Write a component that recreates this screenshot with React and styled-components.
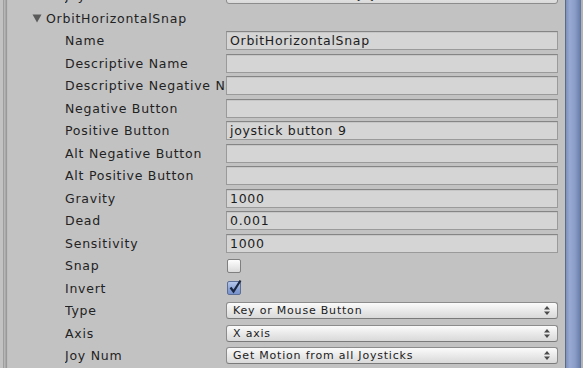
import React from "react";
import styled, { createGlobalStyle } from "styled-components";

const Global = createGlobalStyle`
  html, body { margin: 0; padding: 0; background: #c2c2c2; overflow: hidden; }
  body { width: 583px; height: 368px; font-family: "DejaVu Sans", "Liberation Sans", sans-serif; }
`;

const Frame = styled.div`
  display: flex;
  width: 583px;
  height: 368px;
  overflow: hidden;
  background: #c2c2c2;
`;

const Gutter = styled.div`
  flex: 0 0 8px;
  background: linear-gradient(to right,
    #c2c2c2 0 3px, #9e9e9e 3px 4px, #b6b6b6 4px 5px, #a9a9a9 5px 6px, #999 6px 7px, #bdbdbd 7px 8px);
`;

const Content = styled.div`
  flex: 1;
  display: flex;
  flex-direction: column;
  margin-top: -15.75px;
  padding-right: 7px;
  min-width: 0;
`;

const Scrollbar = styled.div`
  flex: 0 0 18px;
  display: flex;
  background: #b4b4b4;
`;

const Thumb = styled.div`
  flex: 0 0 15px;
  border-left: 1px solid #5c6a88;
  background: linear-gradient(to right, #7d90bb, #98aad2 25%, #8a9dc7 60%, #6d82ae 90%, #5f729c);
`;

const Row = styled.div`
  height: 22.5px;
  display: flex;
  align-items: center;
  padding-left: ${(p) => p.$indent}px;
  box-sizing: border-box;
  flex: 0 0 auto;
`;

const Label = styled.div`
  flex: 0 0 ${(p) => p.$width}px;
  white-space: nowrap;
  overflow: hidden;
  font-size: 12.5px;
  letter-spacing: 0.75px;
  color: #222;
`;

const HeaderLabel = styled.div`
  font-size: 12.5px;
  letter-spacing: 0.75px;
  color: #222;
  white-space: nowrap;
`;

const Arrow = styled.svg`
  width: 10px;
  height: 9px;
  margin-right: 4px;
  flex: 0 0 auto;
`;

const Field = styled.div`
  flex: 1;
  height: 19px;
  box-sizing: border-box;
  background: #d5d5d5;
  border: 1px solid #9a9a9a;
  border-top-color: #858585;
  box-shadow: inset 0 1px 0 #c6c6c6;
  font-size: 12.5px;
  letter-spacing: 0.7px;
  color: #1c1c1c;
  padding-left: 3px;
  line-height: 17px;
  white-space: nowrap;
  overflow: hidden;
`;

const Popup = styled.div`
  flex: 1;
  height: 17px;
  box-sizing: border-box;
  border: 1px solid #8c8c8c;
  border-bottom-color: #7a7a7a;
  border-radius: 3px;
  background: linear-gradient(to bottom, #fbfbfb, #e6e6e6 60%, #d9d9d9);
  display: flex;
  align-items: center;
  padding: 0 7px 0 6px;
  font-size: 11px;
  letter-spacing: 0.8px;
  color: #1c1c1c;
  white-space: nowrap;
`;

const PopupText = styled.span`
  flex: 1;
`;

const Check = styled.div`
  position: relative;
  width: 14px;
  height: 14px;
  margin-left: 1px;
  box-sizing: border-box;
  border: 1px solid ${(p) => (p.$on ? "#5d6f96" : "#7f7f7f")};
  border-radius: 2px;
  background: ${(p) =>
    p.$on
      ? "linear-gradient(to bottom, #b5c6ea, #8aa3d6 60%, #7893cc)"
      : "linear-gradient(to bottom, #fdfdfd, #e8e8e8 60%, #dadada)"};
`;

const CheckMark = styled.svg`
  position: absolute;
  left: 0px;
  top: -3px;
  width: 14px;
  height: 15px;
`;

const PrevPopup = styled.div`
  flex: 1;
  height: 17px;
  box-sizing: border-box;
  border: 1px solid #8c8c8c;
  border-radius: 3px;
  background: linear-gradient(to bottom, #fbfbfb, #e6e6e6 60%, #d9d9d9);
  font-size: 11px;
  letter-spacing: 0.8px;
  padding-left: 6px;
  line-height: 15px;
  color: #1c1c1c;
`;

const Stepper = () => (
  <svg width="6" height="9" viewBox="0 0 6 9">
    <polygon points="0,3.5 3,0 6,3.5" fill="#4a4a4a" />
    <polygon points="0,5.5 3,9 6,5.5" fill="#4a4a4a" />
  </svg>
);

const LABEL_W = 161;
const INDENT = 57;

const rows = [
  { label: "Name", kind: "field", value: "OrbitHorizontalSnap" },
  { label: "Descriptive Name", kind: "field", value: "" },
  { label: "Descriptive Negative Name", kind: "field", value: "" },
  { label: "Negative Button", kind: "field", value: "" },
  { label: "Positive Button", kind: "field", value: "joystick button 9" },
  { label: "Alt Negative Button", kind: "field", value: "" },
  { label: "Alt Positive Button", kind: "field", value: "" },
  { label: "Gravity", kind: "field", value: "1000" },
  { label: "Dead", kind: "field", value: "0.001" },
  { label: "Sensitivity", kind: "field", value: "1000" },
  { label: "Snap", kind: "check", value: false },
  { label: "Invert", kind: "check", value: true },
  { label: "Type", kind: "popup", value: "Key or Mouse Button" },
  { label: "Axis", kind: "popup", value: "X axis" },
  { label: "Joy Num", kind: "popup", value: "Get Motion from all Joysticks" },
];

function Control({ row }) {
  if (row.kind === "field") return <Field>{row.value}</Field>;
  if (row.kind === "check")
    return (
      <Check $on={row.value}>
        {row.value && (
          <CheckMark viewBox="0 0 14 15">
            <path d="M2.5 8.5 L5.5 12.5 L12.5 1.5" fill="none" stroke="#1b2740" strokeWidth="2.2" strokeLinejoin="miter" />
          </CheckMark>
        )}
      </Check>
    );
  return (
    <Popup>
      <PopupText>{row.value}</PopupText>
      <Stepper />
    </Popup>
  );
}

export default function App() {
  return (
    <>
      <Global />
      <Frame>
        <Gutter />
        <Content>
          <Row $indent={INDENT}>
            <Label $width={LABEL_W}>Joy Num</Label>
            <PrevPopup>Get Motion from all Joysticks</PrevPopup>
          </Row>
          <Row $indent={24}>
            <Arrow viewBox="0 0 10 9">
              <polygon points="0.5,0.5 9.5,0.5 5,8.5" fill="#5a5a5a" />
            </Arrow>
            <HeaderLabel>OrbitHorizontalSnap</HeaderLabel>
          </Row>
          {rows.map((r) => (
            <Row key={r.label} $indent={INDENT}>
              <Label $width={LABEL_W}>{r.label}</Label>
              <Control row={r} />
            </Row>
          ))}
        </Content>
        <Scrollbar>
          <Thumb />
        </Scrollbar>
      </Frame>
    </>
  );
}
